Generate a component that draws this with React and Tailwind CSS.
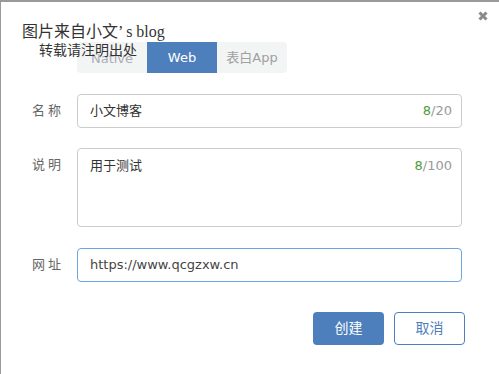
export default function App() {
  const sans = { fontFamily: '"DejaVu Sans", "Noto Sans CJK SC", sans-serif' };
  return (
    <div
      className="relative w-[499px] h-[374px] bg-white border-t-2 border-l border-[#9a9a9a] overflow-hidden"
      style={sans}
    >
      {/* title overlay */}
      <div
        className="absolute left-[21px] top-[20px] text-[#333] leading-none"
        style={{ fontFamily: '"Liberation Serif", "Noto Sans CJK SC", serif' }}
      >
        <div className="text-[16px] leading-[20px]">图片来自小文’ s blog</div>
        <div
          className="text-[14px] leading-[16px] ml-[17px] mt-[-1px]"
          style={{ fontFamily: '"Noto Sans CJK SC", sans-serif' }}
        >
          转载请注明出处
        </div>
      </div>

      {/* close */}
      <svg
        className="absolute left-[477px] top-[9px]"
        width="10"
        height="10"
        viewBox="0 0 10 10"
      >
        <path d="M1.5 1.5 L8.5 8.5 M8.5 1.5 L1.5 8.5" stroke="#8a8a8a" strokeWidth="3" strokeLinecap="butt" />
      </svg>

      <div className="pt-[40px] pl-[31px] pr-[37px]">
        {/* segmented */}
        <div className="ml-[45px] flex w-[210px] h-[31px] rounded-[4px] bg-[#f3f4f4] overflow-hidden text-[13px]">
          <div className="w-[70px] flex items-center justify-center pt-[3px] text-[#a9aeb4]">Native</div>
          <div className="w-[70px] flex items-center justify-center bg-[#4e7fbd] text-white">Web</div>
          <div className="w-[70px] flex items-center justify-center text-[#a0a0a0]">表白App</div>
        </div>

        {/* name */}
        <div className="flex items-center mt-[21px]">
          <div className="w-[45px] text-[13px] text-[#666] tracking-[3px]">名称</div>
          <div className="flex-1 h-[34px] border border-[#ccc] rounded-[4px] flex items-center justify-between px-[12px] text-[13px]">
            <span className="text-[#333]">小文博客</span>
            <span className="text-[#999] mr-[-3px]">
              <span className="text-[#4f9a3a]">8</span>/20
            </span>
          </div>
        </div>

        {/* desc */}
        <div className="flex mt-[20px]">
          <div className="w-[45px] text-[13px] text-[#666] tracking-[3px] pt-[7px]">说明</div>
          <div className="flex-1 h-[79px] border border-[#ccc] rounded-[4px] flex items-start justify-between px-[12px] pt-[7px] text-[13px]">
            <span className="text-[#333]">用于测试</span>
            <span className="text-[#999] mr-[-3px]">
              <span className="text-[#4f9a3a]">8</span>/100
            </span>
          </div>
        </div>

        {/* url */}
        <div className="flex items-center mt-[21px]">
          <div className="w-[45px] text-[13px] text-[#666] tracking-[3px]">网址</div>
          <div className="flex-1 h-[34px] border border-[#6ea6dc] rounded-[4px] flex items-center px-[12px] text-[13px] text-[#444]">
            https://www.qcgzxw.cn
          </div>
        </div>

        {/* buttons */}
        <div className="flex justify-end gap-[10px] mt-[30px] mr-[-3px] text-[14px]">
          <div className="w-[71px] h-[33px] rounded-[4px] bg-[#4e7fbd] text-white flex items-center justify-center">创建</div>
          <div className="w-[71px] h-[33px] rounded-[4px] border border-[#4e7fbd] text-[#4e7fbd] flex items-center justify-center">取消</div>
        </div>
      </div>
    </div>
  );
}
